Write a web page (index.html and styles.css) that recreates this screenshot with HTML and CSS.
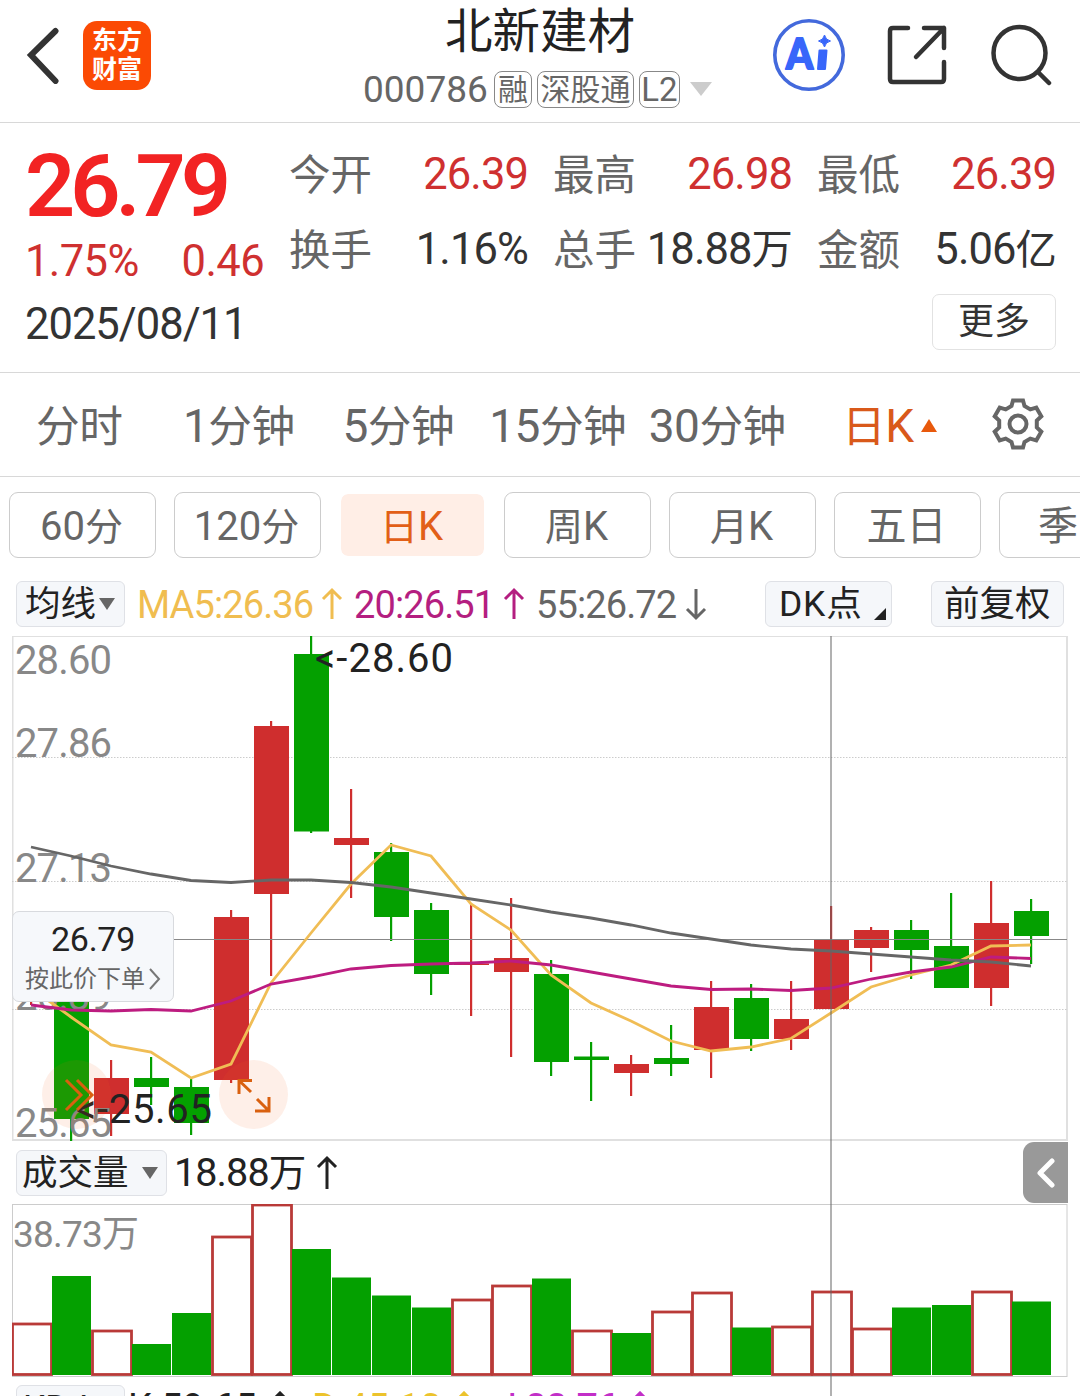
FILE: index.html
```html
<!DOCTYPE html>
<html lang="zh-CN">
<head>
    <meta charset="UTF-8">
    <title>北新建材</title>
    <link rel="stylesheet" href="styles.css">
</head>
<body>
<div id="header">
    <svg class="back" width="40" height="60" viewBox="0 0 40 60"><path d="M35.500 7 11 31 35.500 57" /></svg>
    <div class="logo"><span>东方</span><span>财富</span></div>
    <div class="title">
        <h1>北新建材</h1>
        <div class="code">
            <span class="num">000786</span>
            <i>融</i><i class="wide">深股通</i><i class="l2">L2</i>
            <em class="tri"></em>
        </div>
    </div>
    <div class="tools">
        <svg class="robot" width="74" height="74" viewBox="0 0 74 74">
            <circle cx="37" cy="37" r="34.2"/>
            <text x="14" y="51" textLength="27" lengthAdjust="spacingAndGlyphs">A</text>
            <path d="M47.500 32.500H54.500L53 51H46z"/>
            <path class="star" d="M52.500 17q1 5 6 6-5 1-6 6-1-5-6-6 5-1 6-6z"/>
        </svg>
        <svg class="line share" width="62" height="62" viewBox="0 0 62 62">
            <path d="M22 4H7Q4 4 4 7V55Q4 58 7 58H55Q58 58 58 55V38M38 4H58V24M58 4 30 33"/>
        </svg>
        <svg class="line" width="62" height="62" viewBox="0 0 62 62">
            <circle cx="29.500" cy="29" r="26"/><path d="M48 48 59 59"/>
        </svg>
    </div>
</div>

<div id="quote">
    <div class="price">
        <div class="now">26.79</div>
        <div class="change"><span>1.75%</span><span>0.46</span></div>
        <div class="date">2025/08/11</div>
    </div>
    <div class="info">
        <ul>
            <li><label>今开</label><span class="red">26.39</span></li>
            <li><label>最高</label><span class="red">26.98</span></li>
            <li><label>最低</label><span class="red">26.39</span></li>
            <li><label>换手</label><span>1.16%</span></li>
            <li><label>总手</label><span>18.88<u>万</u></span></li>
            <li><label>金额</label><span>5.06<u>亿</u></span></li>
        </ul>
        <div class="more">更多</div>
    </div>
</div>

<ul id="tabs">
    <li><u>分时</u></li>
    <li>1<u>分钟</u></li>
    <li>5<u>分钟</u></li>
    <li>15<u>分钟</u></li>
    <li>30<u>分钟</u></li>
    <li class="on"><u>日</u>K<em></em></li>
    <li class="gear">
        <svg width="56" height="56" viewBox="-28 -28 56 56">
            <path d="M-6.500-18-5-23.500H5L6.500-18 12.300-14.600 18.300-16.300 23.300-7.700 18.800-3.400V3.400L23.300 7.700 18.300 16.300 12.300 14.600 6.500 18 5 23.500H-5L-6.500 18-12.300 14.600-18.300 16.300-23.300 7.700-18.800 3.400V-3.400L-23.300-7.700-18.300-16.300-12.300-14.600z"/>
            <circle r="8.500"/>
        </svg>
    </li>
</ul>

<ul id="periods">
    <li>60<u>分</u></li>
    <li>120<u>分</u></li>
    <li class="on"><u>日</u>K</li>
    <li><u>周</u>K</li>
    <li><u>月</u>K</li>
    <li>五日</li>
    <li class="season">季K</li>
</ul>

<div id="charts">
    <div class="bar ma">
        <div class="btn">均线<em></em></div>
        <span class="ma5">MA5:26.36</span><svg class="arrow ma5" width="24" height="34"><path d="M12 32V3M3 12 12 3 21 12"/></svg>
        <span class="ma20">20:26.51</span><svg class="arrow ma20" width="24" height="34"><path d="M12 32V3M3 12 12 3 21 12"/></svg>
        <span class="ma55">55:26.72</span><svg class="arrow ma55" width="24" height="34"><path d="M12 2V31M3 22 12 31 21 22"/></svg>
        <div class="btn dk">DK点<em></em></div>
        <div class="btn fq">前复权</div>
    </div>
    <svg id="kline" width="1056" height="506" viewBox="12 636 1056 506"></svg>
    <div class="bar vol">
        <div class="btn">成交量<em></em></div>
        <span>18.88<u>万</u></span><svg class="arrow" width="24" height="36"><path d="M12 34V3M3 12 12 3 21 12"/></svg>
        <div class="fold"><svg width="18" height="30"><path d="M15 3 3 15 15 27"/></svg></div>
    </div>
    <svg id="volume" width="1056" height="174" viewBox="12 1204 1056 174"></svg>
    <div class="bar kdj">
        <div class="btn">KDJ<em></em></div>
        <span>K:59.65</span><svg class="arrow" width="24" height="34"><path d="M12 32V2M3 11 12 2 21 11"/></svg>
        <span class="d">D:45.10</span><svg class="arrow d" width="24" height="34"><path d="M12 32V2M3 11 12 2 21 11"/></svg>
        <span class="j">J:88.76</span><svg class="arrow j" width="24" height="34"><path d="M12 32V2M3 11 12 2 21 11"/></svg>
    </div>

    <div id="cross"></div>
    <div id="order">
        <strong>26.79</strong>
        <span>按此价下单<svg width="14" height="24"><path d="M2 2 11 12 2 22"/></svg></span>
    </div>
    <div class="round prev">
        <svg width="70" height="70"><path d="M24 20 39 35 24 50M35 20 50 35 35 50"/></svg>
    </div>
    <div class="round full">
        <svg width="70" height="70"><path d="M33 20.500H20V34M20 20.500 32 32M36 51H50V37M50 51 38 39"/></svg>
    </div>
</div>
<script src="chart.js"></script>
</body>
</html>
```
FILE: styles.css
```css
* {
    margin: 0;
    padding: 0;
    box-sizing: border-box;
}

ul {
    list-style: none;
}

i, em {
    font-style: normal;
}

u {
    text-decoration: none;
    font-size: 0.95em;
}

body {
    width: 1080px;
    height: 1396px;
    overflow: hidden;
    background-color: #fff;
    color: #333;
    font-family: Roboto, "Noto Sans CJK SC", sans-serif;
}

svg {
    display: block;
    flex: none;
}

svg path {
    fill: none;
}

/* header */
#header {
    height: 123px;
    display: flex;
    position: relative;
    border-bottom: 1px solid #d8d8d8;
    padding: 21px 0 0 20px;
}

.back {
    margin-top: 3px;
    stroke: #333;
    stroke-width: 6;
    stroke-linecap: round;
}

.logo {
    width: 68px;
    height: 69px;
    margin-left: 23px;
    border-radius: 14px;
    background-color: #fb4a04;
    color: #fff;
    font-size: 25px;
    font-weight: 700;
    line-height: 29px;
    text-align: center;
    padding-top: 5px;
}

.logo span {
    display: block;
}

.title {
    width: 380px;
    margin: -21px 0 0 203px;
}

.title h1 {
    height: 66px;
    line-height: 65px;
    font-size: 47.500px;
    font-weight: 400;
    color: #222;
    text-align: center;
    margin-right: 8px;
}

.code {
    display: flex;
    align-items: center;
    height: 46px;
    margin-left: 9px;
    color: #666;
}

.code .num {
    font-size: 37px;
    width: 131px;
}

.code i {
    width: 38px;
    height: 37px;
    line-height: 35px;
    border: 1px solid #888;
    border-radius: 8px;
    font-size: 30px;
    text-align: center;
    margin-right: 5px;
}

.code i.wide {
    width: 97px;
}

.code i.l2 {
    width: 41px;
    font-size: 33px;
    line-height: 36px;
}

.tri {
    margin-left: 5px;
    border: 11px solid transparent;
    border-top: 14px solid #ccc;
    border-bottom: 0;
}

.tools {
    display: flex;
    margin: -3px 0 0 38px;
}

.robot circle {
    fill: none;
    stroke: #4369dc;
    stroke-width: 3.600;
}

.robot text, .robot path {
    font-family: Lato, sans-serif;
    font-weight: 900;
    font-size: 42px;
    fill: #3866fa;
    stroke: #3866fa;
    stroke-width: 2;
    stroke-linejoin: round;
}

.robot .star {
    stroke-width: 1;
}

.line {
    margin-top: 6px;
    fill: none;
    stroke: #333;
    stroke-width: 4.500;
    stroke-linecap: round;
    stroke-linejoin: round;
}

.share {
    margin: 6px 42px 0 40px;
}

/* quote */
#quote {
    height: 250px;
    display: flex;
    border-bottom: 1px solid #d8d8d8;
}

.price {
    width: 289px;
    padding: 13px 0 0 25px;
}

.now {
    height: 99px;
    line-height: 100px;
    font-size: 88px;
    font-weight: 600;
    letter-spacing: -5px;
    color: #f22323;
}

.change {
    width: 239px;
    height: 52px;
    line-height: 54px;
    display: flex;
    justify-content: space-between;
    font-size: 43.500px;
    letter-spacing: -0.600px;
    color: #cf3030;
}

.date {
    margin-top: 11px;
    line-height: 54px;
    font-size: 43.500px;
    letter-spacing: -1px;
}

.info {
    width: 768px;
    padding-top: 14px;
}

.info ul {
    display: grid;
    grid-template-columns: repeat(3, 239px);
    column-gap: 25px;
    grid-auto-rows: 75px;
}

.info li {
    display: flex;
    justify-content: space-between;
    height: 75px;
    line-height: 76px;
    font-size: 43.500px;
    letter-spacing: -0.900px;
}

.info label {
    font-size: 41.500px;
    color: #666;
    line-height: 77px;
    letter-spacing: 0;
}

.info .red {
    color: #cf3030;
}

.more {
    width: 124px;
    height: 56px;
    line-height: 54px;
    margin: 7px 0 0 643px;
    border: 1px solid #e2e2e2;
    border-radius: 7px;
    font-size: 36px;
    text-align: center;
}

/* tabs */
#tabs {
    height: 104px;
    display: flex;
    border-bottom: 1px solid #d8d8d8;
    line-height: 107px;
    font-size: 46px;
    letter-spacing: -0.500px;
    color: #666;
}

#tabs li {
    width: 159.500px;
    height: 103px;
    padding-right: 1px;
    text-align: center;
    white-space: nowrap;
}

#tabs li.on {
    color: #d9591a;
    padding-left: 25px;
}

#tabs li.on em {
    display: inline-block;
    margin-left: 7px;
    vertical-align: 10px;
    border: 8px solid transparent;
    border-top: 0;
    border-bottom: 13px solid #e8590c;
}

#tabs li.gear {
    width: 123px;
    padding: 23px 0 0 33px;
}

.gear svg {
    fill: none;
    stroke: #666;
    stroke-width: 4;
}

/* periods */
#periods {
    height: 104px;
    display: flex;
    gap: 18px;
    padding: 15px 0 0 9px;
    font-size: 40px;
    color: #666;
    overflow: hidden;
}

#periods li {
    flex: none;
    width: 147px;
    height: 66px;
    line-height: 67px;
    border: 1.500px solid #ccc;
    border-radius: 9px;
    padding-right: 2px;
    text-align: center;
}

#periods li.on {
    border: 2px solid #fff;
    background-color: #ffeee6;
    background-clip: padding-box;
    line-height: 65px;
    color: #e25f17;
}

#periods li.season {
    text-align: left;
    padding-left: 38px;
}

/* charts */
#charts {
    position: relative;
    height: 815px;
    padding-left: 12px;
    overflow: hidden;
}

.bar {
    display: flex;
    align-items: center;
    font-size: 38px;
    color: #222;
    white-space: nowrap;
}

.btn {
    flex: none;
    height: 46px;
    line-height: 44px;
    display: flex;
    align-items: center;
    border: 1px solid #dfe1e6;
    border-radius: 6px;
    background-color: #f5f7fa;
    font-size: 35.500px;
}

.btn em {
    border: 8px solid transparent;
    border-top: 12px solid #666;
    border-bottom: 0;
}

.arrow {
    stroke: #222;
    stroke-width: 3;
}

.ma {
    height: 55px;
    padding: 0 0 9px 4px;
}

.ma .btn {
    width: 109px;
    padding-left: 8px;
    margin-right: 12px;
}

.ma .btn em {
    margin-left: 3px;
}

.ma .ma5 {
    color: #f0bd50;
    stroke: #f0bd50;
}

.ma .ma20 {
    color: #b41e80;
    stroke: #b41e80;
}

.ma .ma55 {
    color: #666;
    stroke: #666;
}

.ma span {
    width: 183px;
    letter-spacing: -0.900px;
    line-height: 48px;
    padding-top: 1px;
    stroke: none;
}

.ma span.ma20, .ma span.ma55 {
    width: 148px;
    letter-spacing: -0.900px;
}

.ma .arrow {
    margin-right: 10px;
}

.ma .btn.dk {
    width: 127px;
    margin: 0 39px 0 47px;
    padding-left: 13px;
    letter-spacing: 0.800px;
}

.ma .dk em {
    align-self: flex-end;
    border: 0;
    border-left: 12px solid transparent;
    border-bottom: 12px solid #222;
    margin: 0 0 6px 12px;
}

.ma .btn.fq {
    width: 133px;
    margin: 0;
    padding-left: 12px;
}

.vol {
    height: 62px;
    padding-left: 4px;
    position: relative;
}

.vol .btn {
    width: 151px;
    padding-left: 5px;
    margin-right: 7px;
}

.vol .btn em {
    margin-left: 13px;
}

.vol span {
    width: 134px;
    height: 62px;
    line-height: 61px;
    font-size: 39.500px;
    letter-spacing: -0.900px;
}

.vol .arrow {
    margin-left: 7px;
}

.fold {
    width: 45px;
    height: 61px;
    margin: -1px 12px 0 auto;
    padding: 16px 0 0 14px;
    border-radius: 11px 0 0 11px;
    background-color: #999;
}

.fold path {
    stroke: #fff;
    stroke-width: 5;
    stroke-linecap: round;
    stroke-linejoin: round;
}

.kdj {
    padding: 7px 0 0 4px;
}

.kdj .btn {
    width: 109px;
    padding-left: 6px;
    margin-right: 3px;
}

.kdj .btn em {
    margin-left: 6px;
}

.kdj span {
    width: 140px;
}

.kdj .arrow {
    margin-right: 20px;
}

.kdj .d {
    color: #ecc32c;
    stroke: #ecc32c;
}

.kdj .j {
    color: #c22fc8;
    stroke: #c22fc8;
}

.kdj span.d, .kdj span.j {
    stroke: none;
}

.kdj span.j {
    width: 132px;
    letter-spacing: -0.500px;
}

#kline text {
    font-size: 40px;
    fill: #888;
}

#kline text.mark {
    fill: #222;
}

#volume text {
    font-size: 37px;
    fill: #888;
}

#cross {
    position: absolute;
    left: 830px;
    top: 55px;
    width: 2px;
    height: 760px;
    background-color: rgba(100, 100, 100, 0.5);
}

#order {
    position: absolute;
    left: 12px;
    top: 330px;
    width: 162px;
    height: 91px;
    border: 1px solid #d8dade;
    border-radius: 7px;
    background-color: #f6f8fb;
    padding-top: 5px;
    text-align: center;
}

#order strong {
    display: block;
    font-size: 34px;
    line-height: 44px;
    font-weight: 400;
    letter-spacing: -0.300px;
    color: #222;
}

#order span {
    display: flex;
    align-items: center;
    padding-left: 12px;
    font-size: 24px;
    line-height: 36px;
    color: #666;
}

#order svg {
    margin-left: 3px;
    stroke: #777;
    stroke-width: 2;
}

.round {
    position: absolute;
    top: 479px;
    width: 69px;
    height: 69px;
    border-radius: 50%;
    background-color: rgba(250, 100, 30, 0.1);
}

.round svg {
    stroke: #d9600f;
    stroke-width: 3;
}

.prev {
    left: 42px;
}

.full {
    left: 219px;
}
```
FILE: chart.js
```js
var oKline = document.getElementById('kline');
var oVolume = document.getElementById('volume');
var RED = '#cf2e2e';
var GREEN = '#04a000';

// 颜色, 实体上, 实体下, 影线上, 影线下, 成交量顶
var aData = [
    ['r', 990, 1001, 985, 1005, 1323],
    ['g', 985, 1119, 980, 1141, 1276],
    ['r', 1078, 1114, 1060, 1136, 1330],
    ['g', 1078, 1087, 1057, 1105, 1344],
    ['g', 1087, 1123, 1079, 1135, 1313],
    ['r', 917, 1080, 910, 1083, 1236],
    ['r', 726, 894, 721, 976, 1204],
    ['g', 654, 831.5, 636, 833, 1249],
    ['r', 838, 845, 789, 898, 1277.5],
    ['g', 852, 917, 843, 941, 1295.5],
    ['g', 910, 974, 903, 995, 1307.5],
    ['r', 963.5, 965, 904, 1016, 1299],
    ['r', 958, 972, 898, 1057, 1285],
    ['g', 974, 1062, 960, 1076, 1278.5],
    ['g', 1056.5, 1060, 1042, 1101, 1330],
    ['r', 1064, 1073, 1055, 1096, 1333],
    ['g', 1058, 1064, 1025, 1076, 1311],
    ['r', 1007, 1050, 981, 1078, 1292],
    ['g', 998, 1039, 984, 1051, 1327.5],
    ['r', 1019, 1039, 981, 1050, 1326],
    ['r', 939, 1009, 906, 1009, 1291],
    ['r', 930, 948, 927, 972, 1328],
    ['g', 930, 950, 920, 979, 1307.5],
    ['g', 946, 988, 893, 988, 1305],
    ['r', 923, 988, 881, 1006, 1291],
    ['g', 911, 936, 899, 964, 1301.5]
];
// 成交量柱颜色
var sVol = 'rgrggrrggggrrgrgrrgrrrggrg';

var aMa5 = [988, 1017, 1045, 1052, 1078, 1064, 983, 933, 884, 845, 856, 904, 930, 975, 1003, 1021, 1041, 1051, 1047, 1038.5, 1013, 987, 975, 965, 946, 945];
var aMa20 = [1005, 1010, 1011, 1009.5, 1011, 1001, 984, 977, 969, 965.5, 964, 963, 961, 965, 972, 979, 986, 989.5, 989, 990.5, 988, 979, 972, 967, 957, 958.5];
var aMa55 = [847, 856, 866, 874, 880.5, 882.5, 880, 880, 882.5, 887, 893, 899, 905, 912, 918, 925, 933, 939, 945, 949, 951, 954, 957, 960, 962, 966];

function rect(x, y, w, h, attr) {
    return '<rect x="' + x + '" y="' + y + '" width="' + w + '" height="' + h + '" ' + attr + '/>';
}
function line(x1, y1, x2, y2, attr) {
    return '<line x1="' + x1 + '" y1="' + y1 + '" x2="' + x2 + '" y2="' + y2 + '" ' + attr + '/>';
}
function text(x, y, w, str, attr) {
    return '<text x="' + x + '" y="' + y + '" textLength="' + w + '" ' + (attr || '') + '>' + str + '</text>';
}
function curve(arr, color) {
    var pts = '';
    for (var i = 0; i < arr.length; i++) {
        pts += (31 + 40 * i) + ',' + arr[i] + ' ';
    }
    return '<polyline points="' + pts + '" fill="none" stroke="' + color + '" stroke-width="2.8"/>';
}

var k = rect(12.5, 636, 1054.5, 504, 'fill="none" stroke="#e0e0e0" stroke-width="2"');
var v = '';
var aGrid = [757.5, 881.5, 1009.5];
for (var i = 0; i < aGrid.length; i++) {
    k += line(12, aGrid[i], 1067, aGrid[i], 'stroke="#ccc" stroke-dasharray="1.5 1.5"');
}
for (i = 0; i < aData.length; i++) {
    var d = aData[i];
    var x = 31 + 40 * i;
    var c = d[0] == 'r' ? RED : GREEN;
    k += rect(x - 1, d[3], 2.2, d[4] - d[3], 'fill="' + c + '"');
    k += rect(i ? x - 17 : x, d[1], i ? 35 : 1, d[2] - d[1], 'fill="' + c + '"');
}
k += text(15, 674, 97, '28.60') + text(15, 757, 97, '27.86') + text(15, 882, 97, '27.13') + text(15, 1010, 97, '26.39') + text(15, 1137, 97, '25.65');
k += line(12, 939.5, 1067, 939.5, 'stroke="#888"');
k += curve(aMa5, '#f0bd55') + curve(aMa20, '#bd1c80') + curve(aMa55, '#666');
k += text(315, 672, 138, '&lt;-28.60', 'class="mark"') + text(76, 1123, 136, '&lt;-25.65', 'class="mark"');
oKline.innerHTML = k;

v += rect(12.5, 1204.5, 1054.5, 172, 'fill="none" stroke="#ccc"');
v += text(13, 1247, 126, '38.73万');
for (i = 0; i < aData.length; i++) {
    var y = aData[i][5];
    x = 31 + 40 * i;
    if (sVol.charAt(i) == 'r') {
        v += rect(x - 18.5, y + 1, 39, 1373.5 - y, 'fill="#fff" stroke="#b93a38" stroke-width="2.8"');
    } else {
        v += rect(x - 19, y, 39, 1375 - y, 'fill="' + GREEN + '"');
    }
}
oVolume.innerHTML = v;
```
